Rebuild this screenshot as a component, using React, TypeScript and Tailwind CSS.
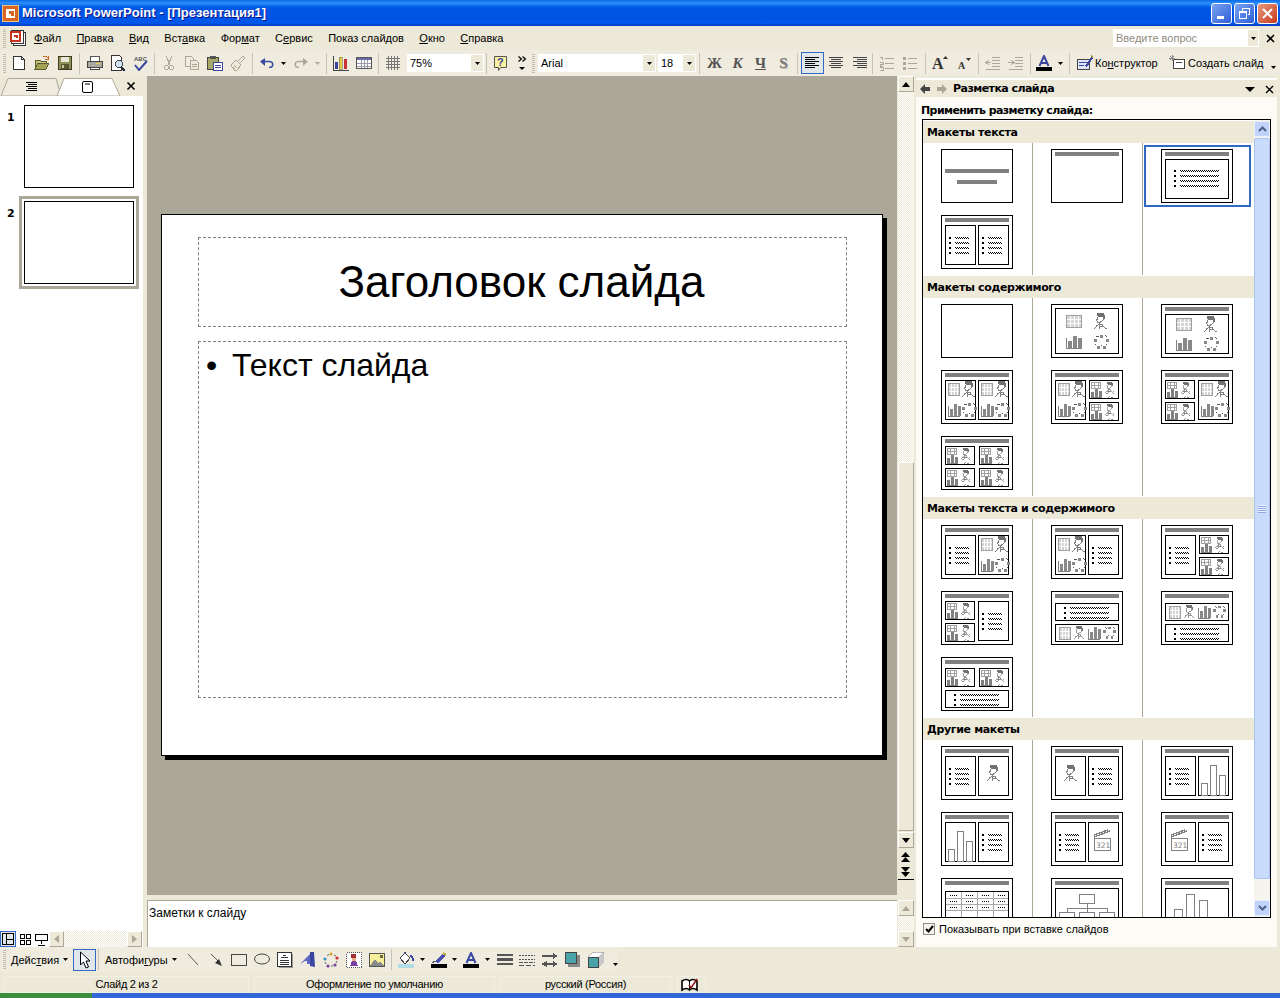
import type { ReactNode } from "react"

// Windows XP PowerPoint 2003 window with the slide layout task pane

const Caret = ({ color = "#000" }: { color?: string }) => (
  <svg width="5" height="3" viewBox="0 0 5 3" className="block">
    <polygon points="0,0 5,0 2.5,3" fill={color} />
  </svg>
)

const Sep = ({ cls = "mx-[3px]" }: { cls?: string }) => <div className={`w-px h-[21px] bg-[#c5c2b8] ${cls}`} />

const Grip = () => (
  <div className="w-[3px] h-[19px] ml-[3px] mr-px bg-[repeating-linear-gradient(180deg,#c1bdaa_0px,#c1bdaa_1px,transparent_1px,transparent_2px)]" />
)

const Btn = ({ children, cls = "w-[23px]" }: { children: ReactNode; cls?: string }) => (
  <div className={`${cls} h-[22px] flex items-center justify-center shrink-0`}>{children}</div>
)

const Ico = ({ children }: { children: ReactNode }) => (
  <svg width="16" height="16" viewBox="0 0 16 16" className="block" shapeRendering="crispEdges">
    {children}
  </svg>
)

// standard toolbar icons
const INew = () => (
  <Ico>
    <path d="M2.5 1.5h8l3 3v10h-11z" fill="#fff" stroke="#333" />
    <path d="M10.5 1.5v3h3" fill="none" stroke="#333" />
  </Ico>
)
const IOpen = () => (
  <Ico>
    <path d="M1 5h5l1 1h5v2H4l-3 6z" fill="#c8c67c" stroke="#5c5c2e" />
    <path d="M1 14l3-6h11l-3 6z" fill="#a5a35a" stroke="#5c5c2e" />
    <path d="M9 1h3l2 2M14 1v3h-3" fill="none" stroke="#c86a22" />
  </Ico>
)
const ISave = () => (
  <Ico>
    <rect x="1.5" y="1.5" width="13" height="13" fill="#8f8f58" stroke="#3d3d22" />
    <rect x="4" y="2" width="8" height="5" fill="#e8e8d8" />
    <rect x="4" y="9" width="8" height="5" fill="#55552f" />
    <rect x="5" y="10" width="2" height="3" fill="#c8c8a0" />
  </Ico>
)
const IPrint = () => (
  <Ico>
    <path d="M4 1h8l1 5H3z" fill="#fff" stroke="#555" />
    <rect x="0.5" y="6.5" width="15" height="6" fill="#a9a9a0" stroke="#444" />
    <rect x="9" y="8" width="4" height="1" fill="#e8d040" />
    <rect x="3.5" y="12.5" width="9" height="2" fill="#fff" stroke="#444" />
  </Ico>
)
const IPreview = () => (
  <Ico>
    <path d="M1.5 0.5h8l2 2v13h-10z" fill="#fff" stroke="#333" />
    <circle cx="9" cy="9" r="3.5" fill="#cfe4ee" stroke="#445" />
    <path d="M11 12l4 4" stroke="#223" strokeWidth="2" />
  </Ico>
)
const ISpell = () => (
  <svg width="16" height="16" viewBox="0 0 16 16" className="block">
    <text x="1" y="6" fontSize="6" fontWeight="700" fontFamily="Liberation Sans" fill="#555">
      ABC
    </text>
    <path d="M2 10l4 5 8-9" fill="none" stroke="#3b46a0" strokeWidth="2" />
  </svg>
)
const ICut = () => (
  <Ico>
    <path d="M5 1l4 9M11 1L7 10" stroke="#aca899" fill="none" />
    <circle cx="5.5" cy="12.5" r="2" fill="none" stroke="#aca899" />
    <circle cx="10.5" cy="12.5" r="2" fill="none" stroke="#aca899" />
  </Ico>
)
const ICopy = () => (
  <Ico>
    <path d="M1.5 1.5h6l2 2v8h-8z" fill="none" stroke="#aca899" />
    <path d="M6.5 5.5h6l2 2v7h-8z" fill="#ece9d8" stroke="#aca899" />
    <path d="M8 9h5M8 11h5" stroke="#aca899" />
  </Ico>
)
const IPaste = () => (
  <Ico>
    <rect x="0.5" y="2.5" width="11" height="12" fill="#a8a868" stroke="#444" />
    <rect x="3" y="1" width="6" height="3" fill="#555" />
    <rect x="6.5" y="7.5" width="9" height="8" fill="#fff" stroke="#3b46a0" />
    <path d="M8 10h6M8 12h6" stroke="#3b46a0" />
  </Ico>
)
const IBrush = () => (
  <Ico>
    <path d="M1 10l5-5 5 5-4 5H4z" fill="#ece9d8" stroke="#aca899" />
    <path d="M8 6l5-5 2 2-5 5" fill="none" stroke="#aca899" />
    <path d="M4 10l3 3M3 12l2 2" stroke="#aca899" />
  </Ico>
)
const IUndo = ({ c }: { c: string }) => (
  <svg width="14" height="10" viewBox="0 0 14 10" className="block">
    <path d="M3 3.5h6c5 0 5 6 0 6" fill="none" stroke={c} strokeWidth="1.6" />
    <polygon points="0,3.5 5,0 5,8" fill={c} />
  </svg>
)
const IChart = () => (
  <Ico>
    <path d="M0.5 1v14h15" fill="none" stroke="#444" />
    <rect x="2" y="7" width="3" height="7" fill="#3b46a0" />
    <rect x="6" y="2" width="3" height="12" fill="#e8d040" stroke="#555" strokeWidth="0.5" />
    <rect x="11" y="4" width="3" height="10" fill="#c83232" />
  </Ico>
)
const ITable = () => (
  <Ico>
    <rect x="0.5" y="2.5" width="15" height="11" fill="#fff" stroke="#555" />
    <rect x="1" y="3" width="14" height="2" fill="#6a6aa8" />
    <path d="M1 8h14M1 11h14M5 5v8M8 5v8M11 5v8" stroke="#9a9aa8" />
  </Ico>
)
const IGrid = () => (
  <Ico>
    <path d="M1 3h14M1 6h14M1 9h14M1 12h14M3 1v14M6 1v14M9 1v14M12 1v14" stroke="#777" />
  </Ico>
)
const IHelp = () => (
  <svg width="16" height="17" viewBox="0 0 16 17" className="block">
    <path d="M1.5 1.5h12v11h-6l-2 3v-3h-4z" fill="#fbf3a0" stroke="#555" />
    <text x="4" y="11" fontSize="11" fontWeight="700" fontFamily="Liberation Sans" fill="#3b46a0">
      ?
    </text>
  </svg>
)
const IChevrons = () => (
  <svg width="9" height="14" viewBox="0 0 9 14" className="block">
    <path d="M0.5 0.5l3 2.5-3 2.5M4.5 0.5l3 2.5-3 2.5" fill="none" stroke="#000" strokeWidth="1.2" />
    <polygon points="1,11 7,11 4,14" fill="#000" />
  </svg>
)
const ILines = ({ rows, c = "#000" }: { rows: [number, number][]; c?: string }) => (
  <Ico>
    {rows.map(([x, w], i) => (
      <rect key={i} x={x} y={2 + i * 2} width={w} height="1" fill={c} />
    ))}
  </Ico>
)
const INumbered = () => (
  <Ico>
    <path d="M1 2h2v3M1 7h3v2H1v2h3M1 12h3v3H1" fill="none" stroke="#aca899" />
    <path d="M6 3h9M6 8h9M6 13h9" stroke="#aca899" />
  </Ico>
)
const IBullets = () => (
  <Ico>
    <rect x="1" y="2" width="3" height="3" fill="#aca899" />
    <rect x="1" y="7" width="3" height="3" fill="#aca899" />
    <rect x="1" y="12" width="3" height="3" fill="#aca899" />
    <path d="M6 3h9M6 8h9M6 13h9" stroke="#aca899" />
  </Ico>
)
const IFontSize = ({ big }: { big: boolean }) => (
  <svg width="18" height="22" viewBox="0 0 18 22" className="block">
    <text x={big ? 0 : 3} y="17" fontSize={big ? 16 : 10} fontWeight="700" fontFamily="Liberation Serif" fill="#333">
      A
    </text>
    {big ? (
      <polygon points="11,7 16,7 13.5,4" fill="#333" />
    ) : (
      <polygon points="11,6 16,6 13.5,9" fill="#333" />
    )}
  </svg>
)
const IIndent = ({ out }: { out: boolean }) => (
  <Ico>
    <path d="M7 2h8M7 5h8M7 8h8M7 11h8M1 14h14" stroke="#aca899" />
    <path d={out ? "M1 7.5h5M4 5L1 7.5 4 10" : "M0 7.5h5M3 5l3 2.5L3 10"} fill="none" stroke="#aca899" />
  </Ico>
)
const IFontColor = ({ w = 16 }: { w?: number }) => (
  <svg width={w} height="16" viewBox="0 0 16 16" className="block">
    <path d="M3.5 11L8 1l4.5 10M5 8h6" fill="none" stroke="#3b46a0" strokeWidth="2" />
    <rect x="0" y="12" width="16" height="4" fill="#000" />
  </svg>
)
const IDesign = () => (
  <Ico>
    <rect x="0.5" y="4.5" width="12" height="10" fill="#dfe6f8" stroke="#444" />
    <path d="M2 7h8M2 10h5" stroke="#3b46a0" />
    <path d="M8 11l6-9 2 1-6 9z" fill="#3b46a0" />
    <path d="M14 1l2 1" stroke="#a8923a" strokeWidth="2" />
  </Ico>
)
const INewSlide = () => (
  <Ico>
    <rect x="4.5" y="4.5" width="11" height="9" fill="#fff" stroke="#444" />
    <path d="M7 7h6" stroke="#444" />
    <path d="M3 0v6M0 3h6M1 1l4 4M5 1L1 5" stroke="#888" />
  </Ico>
)

// drawing toolbar icons
const ICursor = () => (
  <svg width="12" height="18" viewBox="0 0 12 18" className="block">
    <path d="M1.5 1v13l3-3 2.5 6 2.5-1-2.5-6h4z" fill="#fff" stroke="#000" />
  </svg>
)
const ILine = () => (
  <svg width="16" height="16" viewBox="0 0 16 16" className="block">
    <path d="M3 2l10 11" stroke="#555" fill="none" />
  </svg>
)
const IArrow = () => (
  <svg width="16" height="16" viewBox="0 0 16 16" className="block">
    <path d="M3 2l8 8" stroke="#555" />
    <polygon points="14,14 7,11 11,7" fill="#333" />
  </svg>
)
const IRect = () => (
  <Ico>
    <rect x="0.5" y="2.5" width="15" height="11" fill="none" stroke="#444" />
  </Ico>
)
const IOval = () => (
  <svg width="16" height="16" viewBox="0 0 16 16" className="block">
    <ellipse cx="8" cy="7" rx="7.5" ry="5" fill="none" stroke="#444" />
  </svg>
)
const ITextBox = () => (
  <Ico>
    <rect x="0.5" y="0.5" width="14" height="14" fill="#fff" stroke="#333" />
    <path d="M6 3h3M4 5h7M3 8h9M3 10h9M3 12h9" stroke="#333" />
    <path d="M2 15.5h14M15.5 2v14" stroke="#999" />
  </Ico>
)
const IWordArt = () => (
  <svg width="16" height="16" viewBox="0 0 16 16" className="block">
    <polygon points="0,12 10,2 10,12 7,12 7,9 5,9" fill="#5f67c4" />
    <polygon points="10,0 14,0 15,15 10,14" fill="#3b46a0" />
  </svg>
)
const ICycle = () => (
  <svg width="16" height="16" viewBox="0 0 16 16" className="block">
    <circle cx="8" cy="2" r="1.6" fill="#d6a020" />
    <circle cx="14" cy="6" r="1.6" fill="#c83232" />
    <circle cx="12" cy="13" r="1.6" fill="#7a3ea0" />
    <circle cx="5" cy="14" r="1.6" fill="#7a3ea0" />
    <circle cx="2" cy="7" r="1.6" fill="#3b8fc0" />
    <path d="M4 3.5l2-1M11 3l2 1M14 9l-1 2M8 14h2M2 10l1 2" stroke="#666" />
  </svg>
)
const IClip = () => (
  <Ico>
    <rect x="0.5" y="0.5" width="15" height="15" fill="#fff" stroke="#555" strokeDasharray="1 1" />
    <rect x="5" y="2" width="5" height="4" fill="#a83232" />
    <rect x="6" y="6" width="4" height="3" fill="#e8b080" />
    <path d="M4 14l2-5h4l2 5z" fill="#7a3ea0" />
  </Ico>
)
const IPicture = () => (
  <Ico>
    <rect x="0.5" y="1.5" width="15" height="13" fill="#f5ee9a" stroke="#555" />
    <polygon points="1,14 6,7 9,11 11,9 15,14" fill="#8a8a8a" />
    <rect x="11" y="3" width="3" height="3" fill="#6a6a40" />
  </Ico>
)
const IFill = () => (
  <Ico>
    <rect x="0" y="12" width="16" height="4" fill="#b3dde6" />
    <path d="M2 6l5-5 5 5-5 6z" fill="#fff" stroke="#444" />
    <path d="M7 1v-1M12 4c3 0 3 3 3 5" fill="none" stroke="#3b46a0" strokeWidth="2" />
  </Ico>
)
const IPen = () => (
  <Ico>
    <rect x="0" y="12" width="16" height="4" fill="#000" />
    <path d="M4 10l8-9 3 2-8 8z" fill="#4a50b0" />
    <path d="M12 1l3 2" stroke="#c8b040" strokeWidth="2" />
    <path d="M1 11l3-2" stroke="#555" />
  </Ico>
)
const ILineStyle = () => (
  <Ico>
    <rect x="0" y="2" width="16" height="2" fill="#555" />
    <rect x="0" y="6" width="16" height="3" fill="#555" />
    <rect x="0" y="11" width="16" height="2" fill="#555" />
  </Ico>
)
const IDash = () => (
  <Ico>
    <path d="M0 3h16M0 7h16" stroke="#555" strokeDasharray="2 1" />
    <path d="M0 10h16" stroke="#555" strokeDasharray="4 1" />
    <path d="M0 13h16" stroke="#555" strokeDasharray="5 2" />
  </Ico>
)
const ISwap = () => (
  <Ico>
    <path d="M0 4h15M0 12h15" stroke="#555" strokeWidth="1.5" />
    <polygon points="16,4 11,1 11,7" fill="#555" />
    <polygon points="0,12 5,9 5,15" fill="#555" />
    <polygon points="16,12 11,9 11,15" fill="#555" />
  </Ico>
)
const IShadow = () => (
  <Ico>
    <rect x="3" y="3" width="12" height="12" fill="#888" />
    <rect x="0.5" y="0.5" width="11" height="11" fill="#4aa3a8" stroke="#444" />
  </Ico>
)
const I3D = () => (
  <Ico>
    <polygon points="0,5 5,0 16,0 11,5" fill="#fff" stroke="#777" strokeWidth="0.5" />
    <polygon points="11,5 16,0 16,11 11,15" fill="#c8c8c8" />
    <rect x="0.5" y="5.5" width="10" height="10" fill="#4aa3a8" stroke="#444" />
  </Ico>
)

const Bold = ({ c, children }: { c: string; children: ReactNode }) => (
  <span className={`font-['Liberation_Serif',serif] font-bold text-[15px] leading-none ${c}`}>{children}</span>
)

const Combo = ({ w, text }: { w: string; text: string }) => (
  <div className={`${w} h-[18px] bg-white flex items-center justify-between shrink-0`}>
    <span className="pl-[3px] text-[11px]">{text}</span>
    <span className="w-[12px] h-[16px] mr-px bg-[#ece9d8] flex items-center justify-center">
      <Caret />
    </span>
  </div>
)

const menus: [string, string, string][] = [
  ["", "Ф", "айл"],
  ["", "П", "равка"],
  ["", "В", "ид"],
  ["Вст", "а", "вка"],
  ["Фор", "м", "ат"],
  ["С", "е", "рвис"],
  ["Показ слай", "д", "ов"],
  ["", "О", "кно"],
  ["", "С", "правка"],
]

const Scrollbtn = ({ up, c = "#000" }: { up: boolean; c?: string }) => (
  <div className="w-[16px] h-[16px] bg-[#ece9d8] border border-b-[#aca899] border-r-[#aca899] border-t-white border-l-white flex items-center justify-center shrink-0">
    <svg width="8" height="5" viewBox="0 0 8 5" className="block">
      <polygon points={up ? "0,5 8,5 4,0" : "0,0 8,0 4,5"} fill={c} />
    </svg>
  </div>
)

const ScrollSide = ({ left }: { left: boolean }) => (
  <div className="w-[15px] h-[16px] bg-[#ece9d8] border border-b-[#aca899] border-r-[#aca899] border-t-white border-l-white flex items-center justify-center shrink-0">
    <svg width="5" height="8" viewBox="0 0 5 8" className="block">
      <polygon points={left ? "5,0 5,8 0,4" : "0,0 0,8 5,4"} fill="#aca899" />
    </svg>
  </div>
)

const dither = "bg-[repeating-conic-gradient(#ece9d8_0%_25%,#ffffff_0%_50%)] bg-[length:2px_2px]"

// --- slide layout thumbnails, drawn 72x54 ---
const Box = ({ x1, y1, x2, y2 }: { x1: number; y1: number; x2: number; y2: number }) => (
  <rect x={x1 + 0.5} y={y1 + 0.5} width={x2 - x1 - 1} height={y2 - y1 - 1} fill="#fff" stroke="#000" />
)

const Txt = ({ x, x2, y, n = 4 }: { x: number; x2: number; y: number; n?: number }) => (
  <g>
    {Array.from({ length: n }).map((_, i) => (
      <g key={i}>
        <rect x={x} y={y + i * 5} width="2" height="2" fill="#000" />
        <path d={`M${x + 6} ${y + i * 5 + 0.5}H${x2}`} stroke="#000" strokeDasharray="1 1" />
        <path d={`M${x + 7} ${y + i * 5 + 1.5}H${x2}`} stroke="#000" strokeDasharray="1 1" />
      </g>
    ))}
  </g>
)

const TableI = ({ x, y, w = 16 }: { x: number; y: number; w?: number }) => (
  <g transform={`translate(${x} ${y})`}>
    <rect x="0" y="0" width={w} height="13" fill="#a0a0a0" />
    <rect x="1" y="1" width={w - 2} height="11" fill="#d4d4d4" />
    <path d={`M1 4.500H${w - 1}M1 8.500H${w - 1}M${w / 4 + 0.5} 1v11M${w / 2 + 0.5} 1v11M${(w * 3) / 4 + 0.5} 1v11`} stroke="#fff" />
  </g>
)
const TableS = ({ x, y, w = 10 }: { x: number; y: number; w?: number }) => (
  <g transform={`translate(${x} ${y})`}>
    <rect x="0" y="0" width={w} height="7" fill="#a0a0a0" />
    <rect x="1" y="1" width={w - 2} height="5" fill="#fff" />
    <path d={`M1 3.500H${w - 1}M${Math.round(w / 3) + 0.5} 1v5M${Math.round((w * 2) / 3) + 0.5} 1v5`} stroke="#a0a0a0" />
  </g>
)
const PersonI = ({ x, y, s = 1 }: { x: number; y: number; s?: number }) => (
  <g transform={`translate(${x} ${y}) scale(${s})`}>
    <path d="M3 0h7v2h1v4h-1v-2h-6v-1h-1z" fill="#707070" />
    <path d="M3.500 4v2l-1 1 1 2h3l2.500-2v-3" fill="#fff" stroke="#808080" />
    <path d="M5.500 9v2l-3 2-2 3M5.500 11h3v2h-3M5.500 11v5M8.500 13l4 3" fill="none" stroke="#808080" />
  </g>
)
const ChartI = ({ x, y, w = 16 }: { x: number; y: number; w?: number }) => (
  <g transform={`translate(${x} ${y})`}>
    <path d={`M0.500 3v10.500H${w}`} fill="none" stroke="#808080" />
    <rect x="2" y="6" width={w / 4} height="7" fill="#888" />
    <rect x={2 + w / 4 + 1} y="1" width={w / 4} height="12" fill="#888" />
    <rect x={2 + w / 2 + 2} y="3" width={w / 4} height="10" fill="#888" />
  </g>
)
const ChartS = ({ x, y }: { x: number; y: number }) => (
  <g transform={`translate(${x} ${y})`}>
    <rect x="0" y="3" width="3" height="5" fill="#808080" />
    <rect x="4" y="0" width="3" height="8" fill="#808080" />
    <rect x="8" y="2" width="3" height="6" fill="#808080" />
    <path d="M0 8.500h11" stroke="#808080" />
  </g>
)
const CycleI = ({ x, y, s = 1 }: { x: number; y: number; s?: number }) => (
  <g transform={`translate(${x} ${y}) scale(${s})`}>
    <rect x="6" y="1" width="3" height="3" fill="#888" />
    <rect x="12" y="5" width="3" height="3" fill="#888" />
    <rect x="9" y="12" width="3" height="3" fill="#888" />
    <rect x="3" y="12" width="3" height="3" fill="#888" />
    <rect x="0" y="5" width="3" height="3" fill="#888" />
    <path d="M2 2h2v1M11 1l2 2M13 10l-1 1M7 11v1M1 10l1 1" stroke="#555" />
  </g>
)

const Four = ({ x, y, dx = 28, dy = 20, w = 16 }: { x: number; y: number; dx?: number; dy?: number; w?: number }) => (
  <g>
    <TableI x={x} y={y} w={w} />
    <PersonI x={x + dx} y={y - 2} />
    <ChartI x={x} y={y + dy} w={w} />
    <CycleI x={x + dx} y={y + dy - 1} />
  </g>
)
const HalfC = ({ x }: { x: number }) => (
  <g>
    <Box x1={x} y1={10} x2={x + 31} y2={50} />
    <Four x={x + 3} y={13} dx={14} dy={20} w={12} />
  </g>
)
const Quarter = ({ x, y, w = 30 }: { x: number; y: number; w?: number }) => (
  <g>
    <Box x1={x} y1={y} x2={x + w} y2={y + 19} />
    <TableS x={x + 2} y={y + 2} />
    <PersonI x={x + 16} y={y + 2} s={0.7} />
    <ChartS x={x + 2} y={y + 9} />
    <CycleI x={x + 17} y={y + 10} s={0.55} />
  </g>
)
const HalfT = ({ x }: { x: number }) => (
  <g>
    <Box x1={x} y1={10} x2={x + 31} y2={50} />
    <Txt x={x + 4} x2={x + 24} y={22} />
  </g>
)
const Strip = ({ y }: { y: number }) => (
  <g>
    <Box x1={4} y1={y} x2={68} y2={y + 18} />
    <TableI x={8} y={y + 3} w={12} />
    <PersonI x={23} y={y + 2} s={0.8} />
    <ChartI x={37} y={y + 2} w={12} />
    <CycleI x={52} y={y + 2} s={0.85} />
  </g>
)
const StripT = ({ y, h = 18 }: { y: number; h?: number }) => (
  <g>
    <Box x1={4} y1={y} x2={68} y2={y + h} />
    <Txt x={13} x2={58} y={y + 4} n={3} />
  </g>
)
const Bars = ({ x }: { x: number }) => (
  <g fill="#fff" stroke="#808080">
    <rect x={x + 0.5} y={37.5} width="6" height="12" />
    <rect x={x + 9.5} y={19.5} width="6" height="30" />
    <rect x={x + 18.5} y={29.5} width="6" height="20" />
  </g>
)
const Clapper = ({ x }: { x: number }) => (
  <g>
    <rect x={x + 0.5} y="26.5" width="16" height="12" fill="#fff" stroke="#808080" />
    <path d={`M${x} 25l16-6M${x} 23l14-5`} stroke="#808080" strokeWidth="1.4" />
    <text x={x + 2} y="36" fontSize="7.5" fontFamily="DejaVu Sans" fill="#808080">
      321
    </text>
  </g>
)

const Thumb = ({ bar = true, children }: { bar?: boolean; children?: ReactNode }) => (
  <svg width="72" height="54" viewBox="0 0 72 54" className="block" shapeRendering="crispEdges">
    <rect x="0.5" y="0.5" width="71" height="53" fill="#fff" stroke="#000" />
    {bar && <rect x="4" y="3" width="64" height="4" fill="#808080" />}
    {children}
  </svg>
)

type Item = { el: ReactNode; selected?: boolean }

const groups: { title: string; items: Item[]; rows: number }[] = [
  {
    title: "Макеты текста",
    rows: 2,
    items: [
      {
        el: (
          <Thumb bar={false}>
            <rect x="4" y="20" width="64" height="4" fill="#808080" />
            <rect x="16" y="31" width="40" height="4" fill="#808080" />
          </Thumb>
        ),
      },
      { el: <Thumb /> },
      {
        selected: true,
        el: (
          <Thumb>
            <Box x1={4} y1={10} x2={68} y2={50} />
            <Txt x={13} x2={58} y={21} />
          </Thumb>
        ),
      },
      {
        el: (
          <Thumb>
            <HalfT x={4} />
            <HalfT x={37} />
          </Thumb>
        ),
      },
    ],
  },
  {
    title: "Макеты содержимого",
    rows: 3,
    items: [
      { el: <Thumb bar={false} /> },
      {
        el: (
          <Thumb bar={false}>
            <Box x1={4} y1={4} x2={68} y2={50} />
            <Four x={15} y={11} />
          </Thumb>
        ),
      },
      {
        el: (
          <Thumb>
            <Box x1={4} y1={10} x2={68} y2={50} />
            <Four x={15} y={14} dy={19} />
          </Thumb>
        ),
      },
      {
        el: (
          <Thumb>
            <HalfC x={4} />
            <HalfC x={37} />
          </Thumb>
        ),
      },
      {
        el: (
          <Thumb>
            <HalfC x={4} />
            <Quarter x={38} y={10} />
            <Quarter x={38} y={32} />
          </Thumb>
        ),
      },
      {
        el: (
          <Thumb>
            <Quarter x={4} y={10} />
            <Quarter x={4} y={32} />
            <HalfC x={37} />
          </Thumb>
        ),
      },
      {
        el: (
          <Thumb>
            <Quarter x={4} y={10} />
            <Quarter x={38} y={10} />
            <Quarter x={4} y={32} />
            <Quarter x={38} y={32} />
          </Thumb>
        ),
      },
    ],
  },
  {
    title: "Макеты текста и содержимого",
    rows: 3,
    items: [
      {
        el: (
          <Thumb>
            <HalfT x={4} />
            <HalfC x={37} />
          </Thumb>
        ),
      },
      {
        el: (
          <Thumb>
            <HalfC x={4} />
            <HalfT x={37} />
          </Thumb>
        ),
      },
      {
        el: (
          <Thumb>
            <HalfT x={4} />
            <Quarter x={38} y={10} />
            <Quarter x={38} y={32} />
          </Thumb>
        ),
      },
      {
        el: (
          <Thumb>
            <Quarter x={4} y={10} />
            <Quarter x={4} y={32} />
            <HalfT x={37} />
          </Thumb>
        ),
      },
      {
        el: (
          <Thumb>
            <StripT y={12} />
            <Strip y={33} />
          </Thumb>
        ),
      },
      {
        el: (
          <Thumb>
            <Strip y={12} />
            <StripT y={33} />
          </Thumb>
        ),
      },
      {
        el: (
          <Thumb>
            <Quarter x={4} y={11} />
            <Quarter x={38} y={11} />
            <StripT y={33} />
          </Thumb>
        ),
      },
    ],
  },
  {
    title: "Другие макеты",
    rows: 3,
    items: [
      {
        el: (
          <Thumb>
            <HalfT x={4} />
            <Box x1={37} y1={10} x2={68} y2={50} />
            <PersonI x={46} y={19} />
          </Thumb>
        ),
      },
      {
        el: (
          <Thumb>
            <Box x1={4} y1={10} x2={35} y2={50} />
            <PersonI x={13} y={19} />
            <HalfT x={37} />
          </Thumb>
        ),
      },
      {
        el: (
          <Thumb>
            <HalfT x={4} />
            <Box x1={37} y1={10} x2={68} y2={50} />
            <Bars x={40} />
          </Thumb>
        ),
      },
      {
        el: (
          <Thumb>
            <Box x1={4} y1={10} x2={35} y2={50} />
            <Bars x={7} />
            <HalfT x={37} />
          </Thumb>
        ),
      },
      {
        el: (
          <Thumb>
            <HalfT x={4} />
            <Box x1={37} y1={10} x2={68} y2={50} />
            <Clapper x={43} />
          </Thumb>
        ),
      },
      {
        el: (
          <Thumb>
            <Box x1={4} y1={10} x2={35} y2={50} />
            <Clapper x={10} />
            <HalfT x={37} />
          </Thumb>
        ),
      },
      {
        el: (
          <Thumb>
            <Box x1={4} y1={13} x2={68} y2={50} />
            <path d="M20 14v36M36 14v36M52 14v36M5 20h62M5 26h62M5 32h62" stroke="#aaa" />
            <path d="M9 17.5h8M25 17.5h8M41 17.5h8M57 17.5h8M9 23.5h8M25 23.5h8M41 23.5h8M57 23.5h8M9 29.5h8M25 29.5h8M41 29.5h8M57 29.5h8" stroke="#000" strokeDasharray="1 1" />
          </Thumb>
        ),
      },
      {
        el: (
          <Thumb>
            <Box x1={4} y1={10} x2={68} y2={50} />
            <g fill="#fff" stroke="#808080">
              <rect x="28.5" y="16.5" width="15" height="9" />
              <rect x="8.5" y="34.5" width="15" height="9" />
              <rect x="28.5" y="34.5" width="15" height="9" />
              <rect x="48.5" y="34.5" width="15" height="9" />
              <path d="M36 26v4M16 34v-4h40v4M36 30v4" fill="none" />
            </g>
          </Thumb>
        ),
      },
      {
        el: (
          <Thumb>
            <Box x1={4} y1={10} x2={68} y2={50} />
            <g fill="#fff" stroke="#808080">
              <rect x="13.5" y="31.5" width="8" height="18" />
              <rect x="25.5" y="16.5" width="8" height="33" />
              <rect x="38.5" y="22.5" width="8" height="27" />
            </g>
          </Thumb>
        ),
      },
    ],
  },
]

const LayoutGroup = ({ title, items, rows }: { title: string; items: Item[]; rows: number }) => (
  <div>
    <div className="h-[22px] bg-[#ece9d8] pl-[4px] pt-[2px] flex items-center font-bold tracking-[-0.35px] font-['DejaVu_Sans',sans-serif]">
      {title}
    </div>
    <div className="grid grid-cols-[110px_110px_110px] pb-px">
      {Array.from({ length: rows * 3 }).map((_, i) => (
        <div
          key={i}
          className={`relative h-[66px] pt-[6px] pl-[18px] ${i % 3 === 2 ? "" : "border-r border-[#aca899]"}`}
        >
          {items[i]?.selected && (
            <div className="absolute left-px top-[2px] w-[107px] h-[62px] border-2 border-[#316ac5]" />
          )}
          {items[i]?.el}
        </div>
      ))}
    </div>
  </div>
)

export default function App() {
  return (
    <div className="w-[1280px] h-[998px] overflow-hidden flex flex-col bg-[#ece9d8] text-black text-[11px] font-['Liberation_Sans',sans-serif]">
      {/* title bar */}
      <div className="h-[26px] shrink-0 flex items-center bg-[linear-gradient(180deg,#0a6ae8_0%,#2d8ffb_12%,#0058e6_28%,#0054e3_70%,#0058ee_88%,#003dc0_100%)]">
        <div className="w-[17px] h-[17px] ml-[2px] bg-[#d9661f] border border-[#f0c080] flex items-center justify-center">
          <svg width="11" height="11" viewBox="0 0 11 11" className="block">
            <rect x="1" y="1" width="9" height="9" fill="#fff" />
            <path d="M4 3h5v5H6V6H4z" fill="#d9661f" />
          </svg>
        </div>
        <span className="ml-[3px] text-white font-bold text-[13px] [text-shadow:1px_1px_0_#0f1089]">
          Microsoft PowerPoint - [Презентация1]
        </span>
        <div className="ml-auto mr-[2px] flex gap-[2px]">
          <div className="w-[21px] h-[21px] rounded-[3px] border border-white bg-[linear-gradient(135deg,#7ba2f0,#2d5fd8)] flex items-end pl-[5px] pb-[4px]">
            <div className="w-[7px] h-[3px] bg-white" />
          </div>
          <div className="w-[21px] h-[21px] rounded-[3px] border border-white bg-[linear-gradient(135deg,#7ba2f0,#2d5fd8)] flex items-center justify-center">
            <svg width="13" height="13" viewBox="0 0 13 13" className="block" shapeRendering="crispEdges">
              <path d="M4.5 3.5v-2h7v6h-2" fill="none" stroke="#fff" />
              <rect x="1.5" y="4.5" width="7" height="7" fill="none" stroke="#fff" />
              <path d="M2 5h6" stroke="#fff" />
            </svg>
          </div>
          <div className="w-[21px] h-[21px] rounded-[3px] border border-white bg-[linear-gradient(135deg,#e89a80,#c8391a)] flex items-center justify-center">
            <svg width="11" height="11" viewBox="0 0 11 11" className="block">
              <path d="M1 1l9 9M10 1l-9 9" stroke="#fff" strokeWidth="2" />
            </svg>
          </div>
        </div>
      </div>

      {/* menu bar */}
      <div className="h-[24px] shrink-0 flex items-center">
        <Grip />
        <div className="w-[18px] h-[18px] ml-[2px] -mr-px">
          <svg width="18" height="18" viewBox="0 0 18 18" className="block" shapeRendering="crispEdges">
            <rect x="4.5" y="3.5" width="12" height="13" fill="#fff" stroke="#333" />
            <rect x="2.5" y="1.5" width="12" height="13" fill="#fff" stroke="#333" />
            <rect x="1" y="2" width="11" height="11" fill="#c8321e" />
            <rect x="3" y="4" width="7" height="7" fill="#fff" />
            <path d="M5 6h4v3H7V8H5z" fill="#c8321e" />
          </svg>
        </div>
        <div className="flex pl-[8px] gap-[15.4px]">
          {menus.map(([a, b, c]) => (
            <span key={a + b + c} className="pt-px whitespace-pre">
              {a}
              <u>{b}</u>
              {c}
            </span>
          ))}
        </div>
        <div className="ml-auto flex items-center">
          <div className="w-[146px] h-[18px] bg-white flex items-center justify-between">
            <span className="pl-[3px] text-[#8f8d80]">Введите вопрос</span>
            <span className="w-[10px] h-[16px] mr-px bg-[#ece9d8] flex items-center justify-center">
              <Caret />
            </span>
          </div>
          <svg width="9" height="9" viewBox="0 0 9 9" className="block ml-[7px] mr-[5px]">
            <path d="M1 1l7 7M8 1l-7 7" stroke="#000" strokeWidth="1.6" />
          </svg>
        </div>
      </div>

      {/* standard + formatting toolbar */}
      <div className="h-[26px] shrink-0 flex items-center bg-[#efecdf] rounded-[3px]">
        <Grip />
        <Btn><INew /></Btn>
        <Btn><IOpen /></Btn>
        <Btn><ISave /></Btn>
        <Sep />
        <Btn><IPrint /></Btn>
        <Btn><IPreview /></Btn>
        <Btn><ISpell /></Btn>
        <Sep cls="ml-[2px] mr-[2px]" />
        <Btn><ICut /></Btn>
        <Btn><ICopy /></Btn>
        <Btn><IPaste /></Btn>
        <Btn><IBrush /></Btn>
        <Sep />
        <Btn cls="w-[22px]"><IUndo c="#3b4ba0" /></Btn>
        <Btn cls="w-[11px]"><Caret /></Btn>
        <Btn cls="w-[22px] ml-px"><svg width="14" height="10" viewBox="0 0 14 10" className="block -scale-x-100"><path d="M3 3.5h6c5 0 5 6 0 6" fill="none" stroke="#aca899" strokeWidth="1.6" /><polygon points="0,3.5 5,0 5,8" fill="#aca899" /></svg></Btn>
        <Btn cls="w-[11px]"><Caret color="#aca899" /></Btn>
        <Sep cls="ml-[3px] mr-[2px]" />
        <Btn><IChart /></Btn>
        <Btn><ITable /></Btn>
        <Sep cls="ml-[3px] mr-[2px]" />
        <Btn cls="w-[23px]"><IGrid /></Btn>
        <div className="ml-[3px]">
          <Combo w="w-[77px]" text="75%" />
        </div>
        <Sep cls="mx-[2px]" />
        <Btn><IHelp /></Btn>
        <Btn cls="w-[20px]"><IChevrons /></Btn>
        <div className="w-[3px] h-[19px] bg-[repeating-linear-gradient(180deg,#c1bdaa_0px,#c1bdaa_1px,transparent_1px,transparent_2px)]" />
        <div className="ml-[3px] flex gap-[2px]">
          <Combo w="w-[118px]" text="Arial" />
          <Combo w="w-[38px]" text="18" />
        </div>
        <Sep cls="mx-[3px]" />
        <Btn><Bold c="text-[#555]">Ж</Bold></Btn>
        <Btn><Bold c="text-[#555] italic">К</Bold></Btn>
        <Btn><Bold c="text-[#555] underline">Ч</Bold></Btn>
        <Btn><Bold c="text-[#777] [text-shadow:1px_1px_0_#bbb]">S</Bold></Btn>
        <Sep cls="ml-[2px] mr-[3px]" />
        <div className="w-[23px] h-[22px] border border-[#316ac5] bg-[#e1e6ea] flex items-center justify-center shrink-0">
          <ILines rows={[[0, 14], [0, 10], [0, 14], [0, 10], [0, 14], [0, 10]]} />
        </div>
        <Btn><ILines c="#444" rows={[[1, 14], [3, 10], [1, 14], [3, 10], [1, 14], [3, 10]]} /></Btn>
        <Btn><ILines c="#444" rows={[[2, 14], [6, 10], [2, 14], [6, 10], [2, 14], [6, 10]]} /></Btn>
        <Sep cls="ml-[2px] mr-[2px]" />
        <Btn><INumbered /></Btn>
        <Btn><IBullets /></Btn>
        <Sep cls="ml-[4px] mr-[3px]" />
        <Btn><IFontSize big /></Btn>
        <Btn><IFontSize big={false} /></Btn>
        <Sep cls="ml-[3px] mr-[2px]" />
        <Btn><IIndent out /></Btn>
        <Btn><IIndent out={false} /></Btn>
        <Sep cls="ml-[3px] mr-px" />
        <Btn><IFontColor /></Btn>
        <Btn cls="w-[11px]"><Caret /></Btn>
        <Sep cls="ml-[3px] mr-[7px]" />
        <IDesign />
        <span className="ml-[2px] w-[66px] whitespace-pre">
          Ко<u>н</u>структор
        </span>
        <span className="ml-[8px]"><INewSlide /></span>
        <span className="ml-[3px] w-[77px] whitespace-pre">
          Создать слай<u>д</u>
        </span>
        <span className="ml-[6px] mt-[9px]"><Caret /></span>
      </div>

      {/* main area */}
      <div className="h-[871px] shrink-0 flex">
        {/* left slides pane */}
        <div className="w-[143px] shrink-0 flex flex-col bg-white">
          <div className="h-[20px] shrink-0 bg-[#ece9d8] relative">
            <svg width="143" height="20" viewBox="0 0 143 20" className="block absolute left-0 top-0">
              <path d="M1 20L8 2.5H56L61 20z" fill="#efecdf" stroke="#aca899" />
              <path d="M57 20L64 2.5H112L120 20z" fill="#fff" stroke="#aca899" />
              <path d="M26 6.500h11M28 8.500h9M26 10.500h11M28 12.500h9M26 14.500h11" stroke="#000" shapeRendering="crispEdges" />
              <rect x="82.5" y="5.5" width="10" height="11" rx="1.5" fill="#fff" stroke="#000" />
              <path d="M85 8h5" stroke="#000" />
              <path d="M127.500 6.500l7 7M134.500 6.500l-7 7" stroke="#000" strokeWidth="1.6" />
            </svg>
          </div>
          <div className="flex pt-[4px]">
            <span className="w-[19px] pl-[7px] pt-[10px] font-bold font-['DejaVu_Sans',sans-serif]">1</span>
            <div className="w-[120px] h-[93px] border-[3px] border-transparent p-[2px]">
              <div className="w-[110px] h-[83px] border border-black bg-white" />
            </div>
          </div>
          <div className="flex pt-[3px]">
            <span className="w-[19px] pl-[7px] pt-[10px] font-bold font-['DejaVu_Sans',sans-serif]">2</span>
            <div className="w-[120px] h-[93px] border-[3px] border-[#aca899] p-[2px]">
              <div className="w-[110px] h-[83px] border border-black bg-white" />
            </div>
          </div>
          <div className="mt-auto h-[16px] shrink-0 flex items-center">
            <div className="w-[16px] h-[16px] border border-[#316ac5] bg-[#e1e6ea] flex items-center justify-center">
              <svg width="12" height="12" viewBox="0 0 12 12" className="block" shapeRendering="crispEdges">
                <rect x="0.500" y="0.500" width="11" height="11" fill="none" stroke="#000" />
                <path d="M4.500 1v10M5 6.500h6" stroke="#000" />
              </svg>
            </div>
            <div className="w-[18px] flex justify-center">
              <svg width="11" height="11" viewBox="0 0 11 11" className="block" shapeRendering="crispEdges">
                <g fill="none" stroke="#000">
                  <rect x="0.500" y="0.500" width="4" height="4" />
                  <rect x="6.500" y="0.500" width="4" height="4" />
                  <rect x="0.500" y="6.500" width="4" height="4" />
                  <rect x="6.500" y="6.500" width="4" height="4" />
                </g>
              </svg>
            </div>
            <div className="w-[15px] flex justify-center">
              <svg width="13" height="13" viewBox="0 0 13 13" className="block" shapeRendering="crispEdges">
                <rect x="0.500" y="1.500" width="12" height="6" fill="#fff" stroke="#000" />
                <path d="M6.500 8v3M3 12.500h7" stroke="#000" />
              </svg>
            </div>
            <ScrollSide left />
            <div className={`w-[63px] h-[16px] ${dither}`} />
            <ScrollSide left={false} />
          </div>
        </div>

        <div className="w-[4px] shrink-0" />

        {/* center: slide + notes */}
        <div className="w-[767px] shrink-0 flex flex-col">
          <div className="h-[819px] flex shrink-0">
            <div className="w-[750px] bg-[#aca899] pl-[14px] pt-[138px]">
              <div className="w-[722px] h-[542px] bg-white border border-black shadow-[4px_4px_0_#000] pt-[22px] pl-[36px]">
                <div className="w-[649px] h-[90px] border border-dashed border-[#808080] flex items-center justify-center text-[44px] leading-none pr-[2px]">
                  Заголовок слайда
                </div>
                <div className="mt-[14px] w-[649px] h-[357px] border border-dashed border-[#808080] pl-[7px] pt-[5px] text-[32px] leading-[36px] flex">
                  <span className="w-[26px]">•</span>
                  <span>Текст слайда</span>
                </div>
              </div>
            </div>
            <div className="w-[17px] flex flex-col items-center">
              <Scrollbtn up />
              <div className={`w-[16px] h-[370px] ${dither}`} />
              <div className="w-[16px] h-[369px] bg-[#ece9d8] border border-b-[#aca899] border-r-[#aca899] border-t-white border-l-white" />
              <div className="h-px" />
              <Scrollbtn up={false} />
              <div className="w-[16px] h-[32px] border-b border-black flex flex-col items-center gap-[5px] pt-[4px]">
                <svg width="9" height="10" viewBox="0 0 9 10" className="block">
                  <polygon points="0,5 9,5 4.500,0" fill="#000" />
                  <polygon points="0,10 9,10 4.500,5" fill="#000" />
                </svg>
                <svg width="9" height="10" viewBox="0 0 9 10" className="block">
                  <polygon points="0,0 9,0 4.500,5" fill="#000" />
                  <polygon points="0,5 9,5 4.500,10" fill="#000" />
                </svg>
              </div>
            </div>
          </div>
          <div className="h-[5px] shrink-0" />
          <div className="h-[47px] shrink-0 flex">
            <div className="w-[750px] bg-white border-t border-l border-[#aca899] pl-px pt-[3px] text-[12px]">
              Заметки к слайду
            </div>
            <div className="w-[17px] flex flex-col items-center">
              <Scrollbtn up c="#aca899" />
              <div className={`w-[16px] h-[15px] ${dither}`} />
              <Scrollbtn up={false} c="#aca899" />
            </div>
          </div>
        </div>

        <div className="w-[2px] shrink-0" />

        {/* task pane */}
        <div className="w-[361px] shrink-0 flex flex-col mt-[2px] border-t-2 border-white bg-[#fcfbf5] font-['DejaVu_Sans',sans-serif]">
          <div className="h-[17px] shrink-0 pt-px bg-[#ece9d8] flex items-center">
            <svg width="11" height="10" viewBox="0 0 11 10" className="block ml-[4px]">
              <polygon points="0,5 5,0 5,3 10,3 10,7 5,7 5,10" fill="#444" />
            </svg>
            <svg width="11" height="10" viewBox="0 0 11 10" className="block ml-[6px]">
              <polygon points="10,5 5,0 5,3 0,3 0,7 5,7 5,10" fill="#aca899" />
            </svg>
            <span className="ml-[5px] font-bold tracking-[-0.55px]">Разметка слайда</span>
            <span className="ml-auto"><svg width="10" height="5" viewBox="0 0 10 5" className="block"><polygon points="0,0 10,0 5,5" fill="#000" /></svg></span>
            <svg width="9" height="9" viewBox="0 0 9 9" className="block ml-[10px] mr-[3px]">
              <path d="M1 1l7 7M8 1l-7 7" stroke="#000" strokeWidth="1.4" />
            </svg>
          </div>
          <div className="pl-[5px] h-[22px] flex items-center pt-[7px] font-bold tracking-[-0.6px]">Применить разметку слайда:</div>
          <div className="ml-[6px] w-[349px] h-[799px] shrink-0 border border-black flex bg-white">
            <div className="w-[331px] h-[797px] overflow-hidden pt-px">
              {groups.map((g) => (
                <LayoutGroup key={g.title} title={g.title} items={g.items} rows={g.rows} />
              ))}
            </div>
            <div className="w-[16px] h-[797px] flex flex-col bg-[#f5f5ee]">
              <div className="h-[16px] mt-px rounded-[2px] bg-[#c1d3fb] border border-[#e8eefc] flex items-center justify-center">
                <svg width="9" height="6" viewBox="0 0 9 6" className="block">
                  <path d="M1 5l3.500-3.500L8 5" fill="none" stroke="#4d6185" strokeWidth="2" />
                </svg>
              </div>
              <div className="h-[741px] mt-px rounded-[2px] bg-[#c9dcfd] border border-[#a9c2ef] flex items-center justify-center">
                <div className="w-[8px] h-[8px] bg-[repeating-linear-gradient(180deg,#eef4ff_0px,#eef4ff_1px,#8caae0_1px,#8caae0_2px)]" />
              </div>
              <div className="h-[21px]" />
              <div className="h-[16px] rounded-[2px] bg-[#c1d3fb] border border-[#e8eefc] flex items-center justify-center">
                <svg width="9" height="6" viewBox="0 0 9 6" className="block">
                  <path d="M1 1l3.500 3.500L8 1" fill="none" stroke="#4d6185" strokeWidth="2" />
                </svg>
              </div>
            </div>
          </div>
          <div className="ml-[7px] mt-[3px] flex items-center font-['Liberation_Sans',sans-serif]">
            <div className="w-[12px] h-[12px] border border-[#8f8d80] bg-[#f4f3ee] flex items-center justify-center">
              <svg width="9" height="8" viewBox="0 0 9 8" className="block">
                <path d="M1 4l2.500 2.500L8 1" fill="none" stroke="#000" strokeWidth="2" />
              </svg>
            </div>
            <span className="ml-[4px]">Показывать при вставке слайдов</span>
          </div>
        </div>
      </div>

      {/* drawing toolbar */}
      <div className="h-[25px] w-[618px] shrink-0 flex items-center bg-[#efecdf] rounded-[3px]">
        <Grip />
        <span className="ml-[4px] w-[52px] whitespace-pre pt-px">
          Дейс<u>т</u>вия
        </span>
        <span><Caret /></span>
        <div className="ml-[5px] w-[23px] h-[22px] border border-[#316ac5] bg-[#e1e6ea] flex items-center justify-center">
          <ICursor />
        </div>
        <Sep cls="ml-[2px] mr-[6px]" />
        <span className="w-[67px] whitespace-pre pt-px">
          Автофи<u>г</u>уры
        </span>
        <span><Caret /></span>
        <Btn cls="w-[23px] ml-[4px]"><ILine /></Btn>
        <Btn><IArrow /></Btn>
        <Btn><IRect /></Btn>
        <Btn><IOval /></Btn>
        <Btn><ITextBox /></Btn>
        <Btn><IWordArt /></Btn>
        <Btn><ICycle /></Btn>
        <Btn><IClip /></Btn>
        <Btn><IPicture /></Btn>
        <Sep cls="ml-[3px] mr-[2px]" />
        <Btn><IFill /></Btn>
        <Btn cls="w-[11px]"><Caret /></Btn>
        <Btn cls="w-[21px]"><IPen /></Btn>
        <Btn cls="w-[11px]"><Caret /></Btn>
        <Btn cls="w-[22px]"><IFontColor /></Btn>
        <Btn cls="w-[11px]"><Caret /></Btn>
        <Btn><ILineStyle /></Btn>
        <Btn cls="w-[22px]"><IDash /></Btn>
        <Btn><ISwap /></Btn>
        <Btn><IShadow /></Btn>
        <Btn><I3D /></Btn>
        <span className="ml-[6px] mt-[9px]"><Caret /></span>
      </div>

      {/* status bar */}
      <div className="h-[21px] shrink-0 flex items-start pt-[4px] pl-[4px] tracking-[-0.3px]">
        <div className="w-[245px] h-[17px] border border-[#f2f0e4] flex items-center justify-center">Слайд 2 из 2</div>
        <div className="ml-[5px] w-[241px] h-[17px] border border-[#f2f0e4] flex items-center justify-center">Оформление по умолчанию</div>
        <div className="ml-[5px] w-[171px] h-[17px] border border-[#f2f0e4] flex items-center justify-center">русский (Россия)</div>
        <div className="ml-[6px] w-[29px] h-[17px] border border-[#f2f0e4] flex items-center pl-[3px]">
          <svg width="18" height="14" viewBox="0 0 18 14" className="block">
            <path d="M1 3c3-2 5.500-2 7.500 0 2-2 4.500-2 7.500 0v9c-3-2-5.500-2-7.500 0-2-2-4.500-2-7.500 0z" fill="#fff" stroke="#000" strokeWidth="1.6" />
            <path d="M8.500 3v8" stroke="#000" />
            <path d="M8 7l2 3 6-9" fill="none" stroke="#8c1010" strokeWidth="1.5" />
          </svg>
        </div>
      </div>

      {/* taskbar edge */}
      <div className="flex-1 flex">
        <div className="w-[92px] bg-[#3c8d3c]" />
        <div className="flex-1 bg-[#3168d5]" />
      </div>
    </div>
  )
}
